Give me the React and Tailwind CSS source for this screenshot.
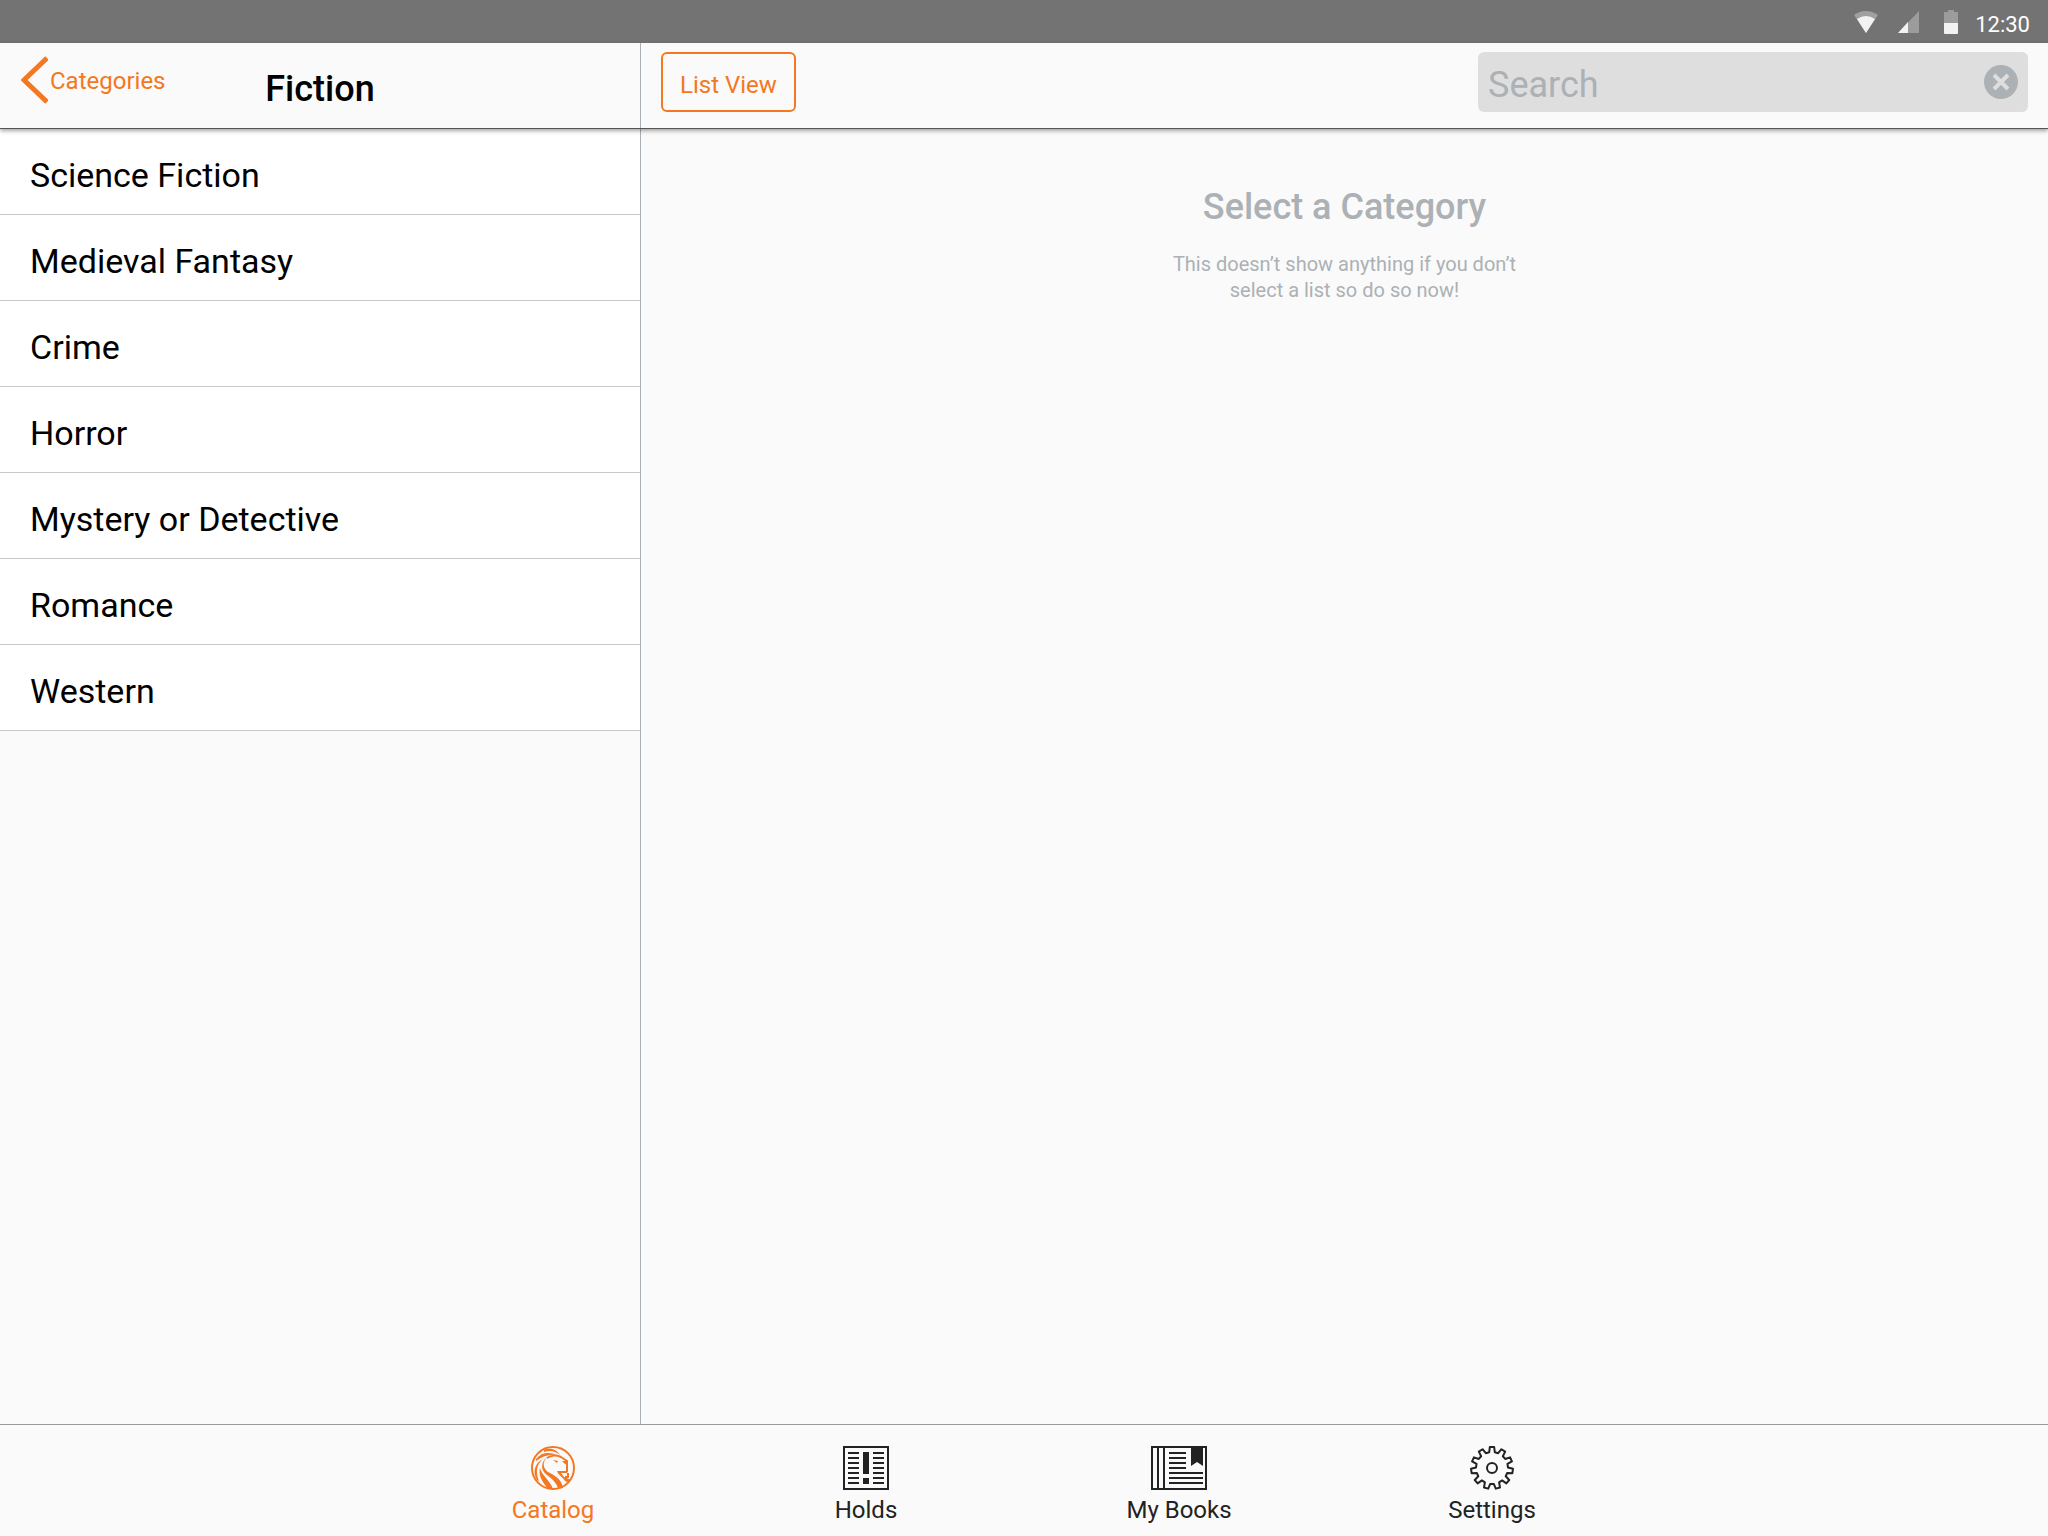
const genres = [
  'Science Fiction',
  'Medieval Fantasy',
  'Crime',
  'Horror',
  'Mystery or Detective',
  'Romance',
  'Western',
];

function StatusBar() {
  return (
    <div className="flex h-[43px] shrink-0 items-center justify-end bg-[#737373] pr-[18px] text-white">
      <svg className="mr-[20px]" width="24" height="22" viewBox="0 0 24 22" aria-hidden="true">
        <path d="M0 4Q12 -4 24 4L12 22Z" fill="#a0a0a0" />
        <path d="M3 8Q12 2 21 8L12 22Z" fill="#f2f2f2" />
      </svg>
      <svg className="mr-[25px]" width="21" height="22" viewBox="0 0 21 22" aria-hidden="true">
        <path d="M21 0V22H0Z" fill="#9c9c9c" />
        <path d="M10 11V22H0Z" fill="#f2f2f2" />
      </svg>
      <svg className="mr-[17px]" width="14" height="24" viewBox="0 0 14 24" aria-hidden="true">
        <path d="M0 2H4V0H10V2H14V13H0Z" fill="#9c9c9c" />
        <path d="M0 13H14V23Q14 24 13 24H1Q0 24 0 23Z" fill="#f2f2f2" />
      </svg>
      <time className="pt-[7px] text-[22px] leading-[28px]">12:30</time>
    </div>
  );
}

function LionIcon() {
  return (
    <svg width="44" height="44" viewBox="0 0 44 44" fill="none" stroke="currentColor" aria-hidden="true">
      <circle cx="22" cy="22" r="21" strokeWidth="2" />
      <g fill="currentColor" stroke="none">
        <path d="M16 11C11 17 12 22 17 26C25 30 31 34 32 42L27 43C26 37 21 33 16 29C9 24 10 16 16 11Z" />
        <path d="M9 22C11 30 18 33 22 43L16 42C12 36 7 30 9 22Z" />
        <path d="M12 13C6 18 4 25 8 35L6 34C1 26 4 17 12 13Z" />
        <path d="M5 13C11 6 18 6 26 9C18 8 12 10 5 15Z" />
        <path d="M13 4C20 1 26 4 29 9C24 5 19 4 13 6Z" />
        <path d="M31 15L36 15L37 19L34 18Z" />
        <path d="M22 14L27 15L26 17Z" />
        <path d="M26 25L37 25L36 27L30 27L33 31L40 34L38 37L34 35C31 30 28 30 26 25Z" />
      </g>
      <path d="M16 12C20 9 26 9 30 11L36 15V26M37 27V31L34 31" strokeWidth="2" />
    </svg>
  );
}

function HoldsIcon() {
  const lines = [6, 11, 16, 21, 26, 31, 36];
  return (
    <svg width="46" height="44" viewBox="0 0 46 44" fill="currentColor" aria-hidden="true">
      <rect x="1" y="1" width="44" height="42" fill="none" stroke="currentColor" strokeWidth="2" />
      {lines.map((y) => (
        <path key={y} d={`M5 ${y}h11v2h-11zM30 ${y}h11v2h-11z`} />
      ))}
      <path d="M20 6h6v22h-6zM20 32h6v6h-6z" />
    </svg>
  );
}

function BooksIcon() {
  return (
    <svg width="56" height="44" viewBox="0 0 56 44" fill="currentColor" aria-hidden="true">
      <rect x="1" y="1" width="54" height="42" fill="none" stroke="currentColor" strokeWidth="2" />
      <path d="M6 0h2v44h-2zM12 0h2v44h-2zM18 6h17v2h-17zM18 11h17v2h-17zM18 16h17v2h-17zM18 21h17v2h-17zM18 26h34v2h-34zM18 31h34v2h-34zM18 36h34v2h-34z" />
      <path d="M40 0H52V20L46 16L40 20Z" />
    </svg>
  );
}

const gearPoints = Array.from({ length: 11 }, (_, i) =>
  [[-10, 16], [-6, 21], [6, 21], [10, 16]].map(([deg, r]) => {
    const a = (((i * 360) / 11 + deg - 90) * Math.PI) / 180;
    return `${(22 + r * Math.cos(a)).toFixed(2)},${(22 + r * Math.sin(a)).toFixed(2)}`;
  }).join(' ')
).join(' ');

function GearIcon() {
  return (
    <svg width="44" height="44" viewBox="0 0 44 44" fill="none" stroke="currentColor" strokeWidth="2" strokeLinejoin="round" aria-hidden="true">
      <polygon points={gearPoints} />
      <circle cx="22" cy="22" r="5" />
    </svg>
  );
}

const tabs = [
  { name: 'Catalog', Icon: LionIcon, active: true },
  { name: 'Holds', Icon: HoldsIcon },
  { name: 'My Books', Icon: BooksIcon },
  { name: 'Settings', Icon: GearIcon },
];

export default function App() {
  return (
    <div className="flex min-h-screen flex-col bg-[#fafafa] font-['Roboto',sans-serif] text-black">
      <StatusBar />
      <header className="relative z-10 flex h-[86px] shrink-0 border-b border-[#555] bg-[#fafafa] shadow-[0_2px_4px_rgba(0,0,0,0.35)]">
        <div className="grid w-[641px] shrink-0 grid-cols-[1fr_auto_1fr] border-r border-[#a9b0b5]">
          <button type="button" className="mt-[12px] ml-[21px] flex h-[50px] items-center gap-[2px] text-[24px] text-[#f47721]">
            <svg width="27" height="48" viewBox="0 0 27 48" fill="none" stroke="currentColor" strokeWidth="5" aria-hidden="true">
              <path d="M26 2L3 24L26 46" />
            </svg>
            <span className="pt-[2px]">Categories</span>
          </button>
          <h1 className="pt-[25px] text-[36px] leading-[42px] font-medium">Fiction</h1>
        </div>
        <div className="flex flex-1 items-start justify-between pt-[9px] pr-[20px] pl-[20px]">
          <button type="button" className="h-[60px] rounded-md border-2 border-[#f47721] px-[17px] pt-[6px] text-[24px] text-[#f47721]">
            List View
          </button>
          <div className="flex h-[60px] w-[550px] items-center rounded-md bg-[#dedede] pr-[10px] pl-[10px]">
            <input
              type="text"
              aria-label="Search"
              placeholder="Search"
              className="min-w-0 flex-1 bg-transparent pt-[6px] text-[36px] leading-[44px] outline-none placeholder:text-[#abb1b5]"
            />
            <button type="button" aria-label="Clear search">
              <svg width="34" height="34" viewBox="0 0 34 34" aria-hidden="true">
                <circle cx="17" cy="17" r="17" fill="#abb1b5" />
                <path d="M10 10L24 24M24 10L10 24" stroke="#dedede" strokeWidth="4" />
              </svg>
            </button>
          </div>
        </div>
      </header>
      <div className="flex flex-1">
        <nav aria-label="Genres" className="w-[641px] shrink-0 border-r border-[#a9b0b5]">
          <ul>
            {genres.map((genre) => (
              <li key={genre} className="border-b border-[#c9c9c9] bg-white">
                <a href="#" className="flex h-[85px] items-center pt-[7px] pl-[30px] text-[34px]">
                  {genre}
                </a>
              </li>
            ))}
          </ul>
        </nav>
        <main className="flex-1 pt-[56px] text-center text-[#abb1b5]">
          <h2 className="text-[36px] leading-[44px] font-medium">Select a Category</h2>
          <p className="mx-auto mt-[22px] w-[360px] text-[20px] leading-[26px]">
            This doesn’t show anything if you don’t select a list so do so now!
          </p>
        </main>
      </div>
      <nav aria-label="Main" className="flex h-[112px] shrink-0 justify-center border-t border-[#9c9a96] pr-[3px] text-[#222]">
        {tabs.map(({ name, Icon, active }) => (
          <button
            key={name}
            type="button"
            className={`flex w-[313px] flex-col items-center pt-[21px] text-[24px] leading-[30px] ${active ? 'text-[#f47721]' : ''}`}
          >
            <Icon />
            <span className="mt-[5px]">{name}</span>
          </button>
        ))}
      </nav>
    </div>
  );
}
